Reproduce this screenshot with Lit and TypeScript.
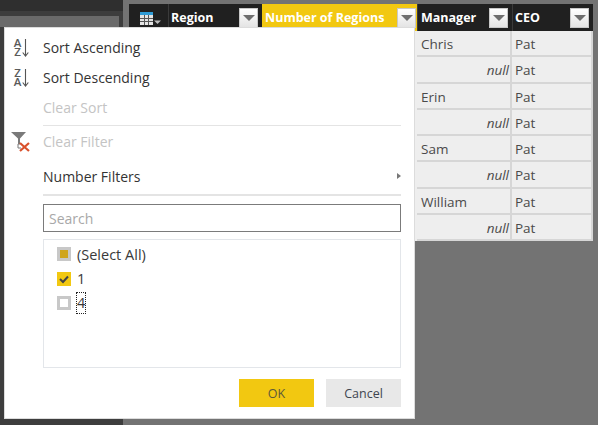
import { LitElement, css, html, svg } from "lit";
import { customElement } from "lit/decorators.js";

const COLUMNS = ["Region", "Number of Regions", "Manager", "CEO"];

const ROWS: Array<[string | null, string]> = [
  ["Chris", "Pat"],
  [null, "Pat"],
  ["Erin", "Pat"],
  [null, "Pat"],
  ["Sam", "Pat"],
  [null, "Pat"],
  ["William", "Pat"],
  [null, "Pat"],
];

const sortIcon = (top: string, bottom: string) => html`<svg
  class="menu-icon"
  width="22"
  height="24"
  viewBox="0 0 22 24"
>
  <text x="7.500" y="12" class="sort-letter">${top}</text>
  <text x="7.500" y="20.700" class="sort-letter">${bottom}</text>
  ${svg`<path d="M15.500 4V20.500M12.700 17.500L15.500 21L18.300 17.500" fill="none" stroke="#555" stroke-width="1.100"/>`}
</svg>`;

const clearFilterIcon = html`<svg
  class="menu-icon"
  width="22"
  height="22"
  viewBox="0 0 22 22"
>
  <path d="M0 0H15L9 6.500V12.500H7V6.500Z" fill="#7a7a7a" />
  <path d="M7 12V16H10" fill="none" stroke="#7a7a7a" stroke-width="1" />
  <path
    d="M9 11L18 19M18 11L9 19"
    fill="none"
    stroke="#d9512c"
    stroke-width="2.200"
  />
</svg>`;

@customElement("app-root")
export class AppRoot extends LitElement {
  render() {
    return html`
      <div class="page">
        <div class="side">
          <div class="side-top"></div>
          <div class="side-band"></div>
          <div class="side-panel"></div>
          <div class="side-rest"></div>
        </div>
        <div class="main">${this.renderTable()}</div>
      </div>
      ${this.renderMenu()}
    `;
  }

  private renderTable() {
    return html`<div class="table">
      <div class="th th-icon">
        <svg width="22" height="13" viewBox="0 0 22 13">
          <rect x="0" y="0" width="13" height="3" fill="#2e9bd6" />
          <rect x="0" y="3" width="13" height="10" fill="#e4e4e4" />
          <path
            d="M0 6.500H13M0 9.500H13M4.500 3V13M8.500 3V13"
            stroke="#555"
            stroke-width="1"
          />
          <path d="M14 8.500H21L17.500 12Z" fill="#bbb" />
        </svg>
      </div>
      ${COLUMNS.map(
        (name, i) => html`<div class="th ${i === 1 ? "th-active" : ""}">
          <span>${name}</span>
          <div class="filter-btn"><i></i></div>
        </div>`
      )}
      ${ROWS.map(
        ([manager, ceo]) => html`
          <div class="td td-blank"></div>
          <div class="td td-blank"></div>
          <div class="td td-blank"></div>
          ${manager
            ? html`<div class="td">${manager}</div>`
            : html`<div class="td td-null">null</div>`}
          <div class="td td-ceo">${ceo}</div>
        `
      )}
    </div>`;
  }

  private renderMenu() {
    return html`<div class="menu">
      <div class="item item-a">
        ${sortIcon("A", "Z")}<span>Sort Ascending</span>
      </div>
      <div class="item">
        ${sortIcon("Z", "A")}<span>Sort Descending</span>
      </div>
      <div class="item disabled"><span>Clear Sort</span></div>
      <div class="rule rule-thin"></div>
      <div class="item disabled">
        ${clearFilterIcon}<span>Clear Filter</span>
      </div>
      <div class="item item-d">
        <span>Number Filters</span><i class="submenu"></i>
      </div>
      <div class="rule rule-thick"></div>
      <div class="search">Search</div>
      <div class="list">
        <div class="check-row">
          <div class="box box-mixed"><i></i></div>
          <span>(Select All)</span>
        </div>
        <div class="check-row">
          <div class="box box-on">
            <svg width="14" height="14" viewBox="0 0 14 14">
              <path
                d="M3 7L6 10L11 4.500"
                fill="none"
                stroke="#444"
                stroke-width="2"
              />
            </svg>
          </div>
          <span>1</span>
        </div>
        <div class="check-row">
          <div class="box"></div>
          <span class="focused">4</span>
        </div>
      </div>
      <div class="buttons">
        <div class="btn btn-ok">OK</div>
        <div class="btn btn-cancel">Cancel</div>
      </div>
    </div>`;
  }

  static styles = css`
    :host {
      display: block;
      position: relative;
      width: 598px;
      height: 425px;
      overflow: hidden;
      background: #737373;
      font-family: "Open Sans", "Noto Sans", sans-serif;
      color: #3a3a3a;
    }
    .page {
      display: flex;
      height: 425px;
    }
    .side {
      width: 123px;
      flex: none;
      display: flex;
      flex-direction: column;
    }
    .side-top {
      height: 11px;
      background: #2f2f2f;
    }
    .side-band {
      height: 5px;
      background: #3d3d3d;
    }
    .side-panel {
      height: 11px;
      background: #6a6a6a;
      border-right: 4px solid #3d3d3d;
    }
    .side-rest {
      flex: 1;
      background: #3d3d3d;
    }
    .main {
      padding: 4px 5px 0 6px;
    }
    .table {
      display: grid;
      grid-template-columns: 39px 94px 155px 95px 81px;
      grid-template-rows: 27px repeat(8, 26.25px);
      width: 464px;
      background: #eeeeee;
      font-size: 13.500px;
    }
    .th {
      display: flex;
      align-items: center;
      justify-content: space-between;
      background: #202020;
      color: #fff;
      font-weight: 700;
      font-size: 12.500px;
      padding: 0 4px 0 3px;
      border-left: 1px solid #3a3a3a;
      box-sizing: border-box;
    }
    .th:nth-child(2),
    .th:nth-child(5) {
      padding-left: 2px;
    }
    .th-icon {
      justify-content: flex-start;
      padding: 1px 0 0 11px;
      border-left: 0;
    }
    .th-active {
      background: #f2c811;
      border-left: 0;
      padding-right: 1px;
    }
    .filter-btn {
      width: 19px;
      height: 20px;
      box-sizing: border-box;
      background: linear-gradient(#ffffff, #e4e4e4);
      border: 1px solid #c8c8c8;
      display: flex;
      align-items: center;
      justify-content: center;
    }
    .filter-btn i {
      width: 0;
      height: 0;
      border-left: 6px solid transparent;
      border-right: 6px solid transparent;
      border-top: 6px solid #6e6e6e;
      margin-top: 1px;
    }
    .td {
      display: flex;
      align-items: center;
      box-sizing: border-box;
      padding: 2px 0 0 4px;
      border-right: 2px solid #d6d6d6;
      border-bottom: 2px solid #d6d6d6;
      color: #4a4a4a;
    }
    .td-ceo {
      padding-left: 3px;
    }
    .td-blank {
      border: 0;
    }
    .td-null {
      justify-content: flex-end;
      font-style: italic;
      padding: 2px 1px 0 0;
    }
    .menu {
      position: absolute;
      left: 4px;
      top: 27px;
      width: 411px;
      height: 392px;
      box-sizing: border-box;
      background: #fff;
      border: 1px solid #dcdcdc;
      padding: 0 13px 0 38px;
      display: flex;
      flex-direction: column;
      font-size: 14px;
    }
    .item {
      position: relative;
      display: flex;
      align-items: center;
      height: 30px;
      flex: none;
      color: #333;
    }
    .item-a {
      margin-top: 4px;
    }
    .item-d {
      margin-top: 5px;
    }
    .disabled {
      color: #c4c4c4;
    }
    .menu-icon {
      position: absolute;
      left: -33px;
      top: 3px;
    }
    .sort-letter {
      font-family: "Open Sans", sans-serif;
      font-size: 11.500px;
      font-weight: 600;
      fill: #5a5a5a;
      text-anchor: middle;
    }
    .disabled .menu-icon {
      left: -32px;
      top: 6px;
    }
    .submenu {
      position: absolute;
      right: 0;
      top: 12px;
      width: 0;
      height: 0;
      border-top: 3.500px solid transparent;
      border-bottom: 3.500px solid transparent;
      border-left: 4px solid #777;
    }
    .rule {
      flex: none;
      background: #e4e4e4;
    }
    .rule-thin {
      height: 1px;
      margin-top: 3px;
    }
    .rule-thick {
      height: 2px;
      margin-top: 3px;
    }
    .search {
      flex: none;
      box-sizing: border-box;
      height: 28px;
      margin-top: 8px;
      border: 1px solid #7b7b7b;
      display: flex;
      align-items: center;
      padding-left: 5px;
      color: #a8a8a8;
    }
    .list {
      flex: none;
      box-sizing: border-box;
      height: 129px;
      margin-top: 7px;
      border: 1px solid #e3e6ea;
      padding: 2px 13px;
      display: flex;
      flex-direction: column;
      font-size: 14.500px;
    }
    .check-row {
      display: flex;
      align-items: center;
      gap: 6px;
      height: 24.500px;
    }
    .box {
      width: 14px;
      height: 14px;
      box-sizing: border-box;
      border: 3px solid #c8c8c8;
      background: #fff;
      display: flex;
      align-items: center;
      justify-content: center;
      flex: none;
    }
    .box-mixed i {
      width: 8px;
      height: 8px;
      background: #cfa51d;
      flex: none;
    }
    .box-mixed {
      background: #c8c8c8;
    }
    .box-on {
      border: 0;
      background: #f2c811;
    }
    .focused {
      outline: 1px dotted #222;
      outline-offset: 0;
      line-height: 20px;
    }
    .buttons {
      flex: none;
      display: flex;
      justify-content: flex-end;
      gap: 12px;
      margin-top: 11px;
    }
    .btn {
      width: 75px;
      height: 28px;
      display: flex;
      align-items: center;
      justify-content: center;
      font-size: 12.500px;
    }
    .btn-ok {
      background: #f2c811;
      color: #5c5a3a;
    }
    .btn-cancel {
      background: #e8e8e8;
      color: #3f4650;
    }
  `;
}
